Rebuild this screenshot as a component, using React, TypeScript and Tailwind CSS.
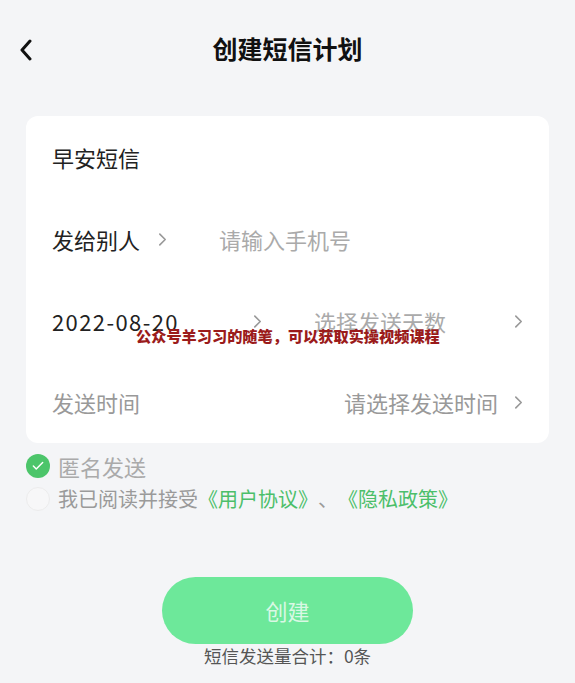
import { Check } from "lucide-react";

const font = { fontFamily: '"Noto Sans CJK SC", "Noto Sans", sans-serif' };

function Chevron({ className }: { className?: string }) {
  return (
    <svg viewBox="0 0 10 16" className={className} fill="none" stroke="currentColor" strokeWidth="1.8" strokeLinecap="round" strokeLinejoin="round">
      <path d="M2 2l6 6-6 6" />
    </svg>
  );
}

export default function App() {
  return (
    <main className="relative w-[575px] h-[683px] bg-[#f4f5f7] text-[#222] overflow-hidden [text-spacing-trim:space-all]" style={font}>
      <header className="relative flex items-center justify-center h-[100px]">
        <svg viewBox="0 0 14 22" className="absolute left-[19px] top-[39px] w-[14px] h-[22px]" fill="none" stroke="#111" strokeWidth="3" strokeLinecap="round" strokeLinejoin="round">
          <path d="M11 2L3 11l8 9" />
        </svg>
        <h1 className="text-[25px] font-bold text-[#111] -mt-[2px]">创建短信计划</h1>
      </header>

      <section className="mt-[16px] mx-[26px] bg-white rounded-xl flex flex-col text-[22px]">
        <div className="h-[82px] flex items-center px-[26px]">早安短信</div>
        <div className="h-[82px] flex items-center px-[26px]">
          <span>发给别人</span>
          <Chevron className="ml-[18px] w-[9px] h-[15px] text-[#999]" />
          <span className="ml-[52px] text-[#aaa]">请输入手机号</span>
        </div>
        <div className="h-[82px] flex items-center px-[26px]">
          <span className="w-[201px] tracking-[1.4px]">2022-08-20</span>
          <Chevron className="w-[9px] h-[15px] text-[#999]" />
          <span className="ml-[52px] text-[#aaa]">选择发送天数</span>
          <Chevron className="ml-auto w-[9px] h-[15px] text-[#999]" />
        </div>
        <div className="h-[81px] flex items-center px-[26px] text-[#999]">
          <span>发送时间</span>
          <span className="ml-auto">请选择发送时间</span>
          <Chevron className="ml-[16px] w-[9px] h-[15px]" />
        </div>
      </section>

      <div className="mt-[11px] ml-[26px] flex flex-col gap-[9px]">
        <label className="flex items-center gap-[8px] text-[22px] text-[#aaa] leading-[24px]">
          <span className="w-[24px] h-[24px] rounded-full bg-[#4cc56a] flex items-center justify-center">
            <Check className="w-[14px] h-[14px] text-white" strokeWidth={2.5} />
          </span>
          匿名发送
        </label>
        <label className="flex items-center gap-[8px] text-[20px] text-[#9a9a9a] leading-[24px]">
          <span className="w-[24px] h-[24px] rounded-full border border-[#ececec] bg-[#f7f7f8]" />
          <span>
            我已阅读并接受<span className="text-[#4cbf6a]">《用户协议》</span>、<span className="text-[#4cbf6a]">《隐私政策》</span>
          </span>
        </label>
      </div>

      <div className="mt-[66px] flex flex-col items-center">
        <button className="w-[251px] h-[67px] rounded-full bg-[#6de89a] text-[#d9f8e4] text-[22px]">创建</button>
        <p className="-mt-[1px] text-[17.5px] text-[#555]">短信发送量合计：0条</p>
      </div>

      <span className="absolute left-[136px] top-[324px] text-[15.2px] font-black text-[#9b1b1b]">
        公众号羊习习的随笔，可以获取实操视频课程
      </span>
    </main>
  );
}
